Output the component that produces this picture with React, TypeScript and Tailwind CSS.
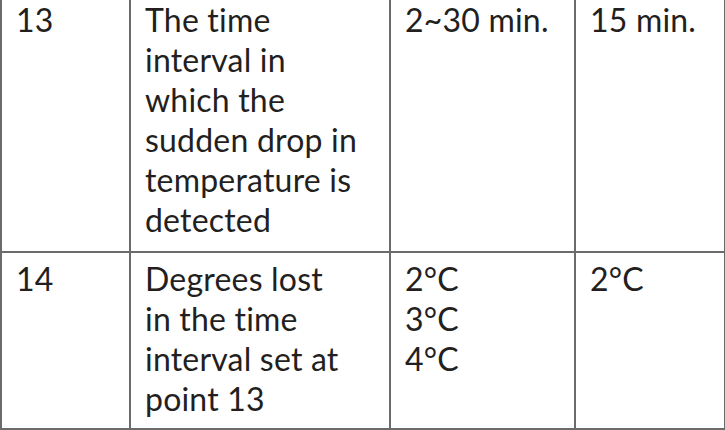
const rows = [
  {
    no: '13',
    lines: ['The time', 'interval in', 'which the', 'sudden drop in', 'temperature is', 'detected'],
    range: ['2~30 min.'],
    def: ['15 min.'],
  },
  {
    no: '14',
    lines: ['Degrees lost', 'in the time', 'interval set at', 'point 13'],
    range: ['2°C', '3°C', '4°C'],
    def: ['2°C'],
  },
]

function Cell({ lines, className = '' }: { lines: string[]; className?: string }) {
  return (
    <td className={`border-2 border-[#6b6b6b] align-top pl-[14px] pr-2 ${className}`}>
      {lines.map((l) => (
        <div key={l}>{l}</div>
      ))}
    </td>
  )
}

export default function App() {
  return (
    <div className="w-[725px] h-[430px] overflow-hidden bg-white">
      <table
        className="-mt-[6px] border-collapse w-[724px] table-fixed text-[32px] leading-[40px] text-[#231f20] [font-variant-ligatures:none] tracking-[0.2px]"
        style={{ fontFamily: 'Lato, "Noto Sans", sans-serif' }}
      >
        <colgroup>
          <col className="w-[129px]" />
          <col className="w-[260px]" />
          <col className="w-[185px]" />
          <col className="w-[150px]" />
        </colgroup>
        <tbody>
          <tr className="h-[257px]">
            <Cell lines={[rows[0].no]} className="pt-[4px]" />
            <Cell lines={rows[0].lines} className="pt-[4px]" />
            <Cell lines={rows[0].range} className="pt-[4px]" />
            <Cell lines={rows[0].def} className="pt-[4px]" />
          </tr>
          <tr className="h-[177px]">
            <Cell lines={[rows[1].no]} className="pt-[6px]" />
            <Cell lines={rows[1].lines} className="pt-[6px]" />
            <Cell lines={rows[1].range} className="pt-[6px]" />
            <Cell lines={rows[1].def} className="pt-[6px]" />
          </tr>
        </tbody>
      </table>
    </div>
  )
}
